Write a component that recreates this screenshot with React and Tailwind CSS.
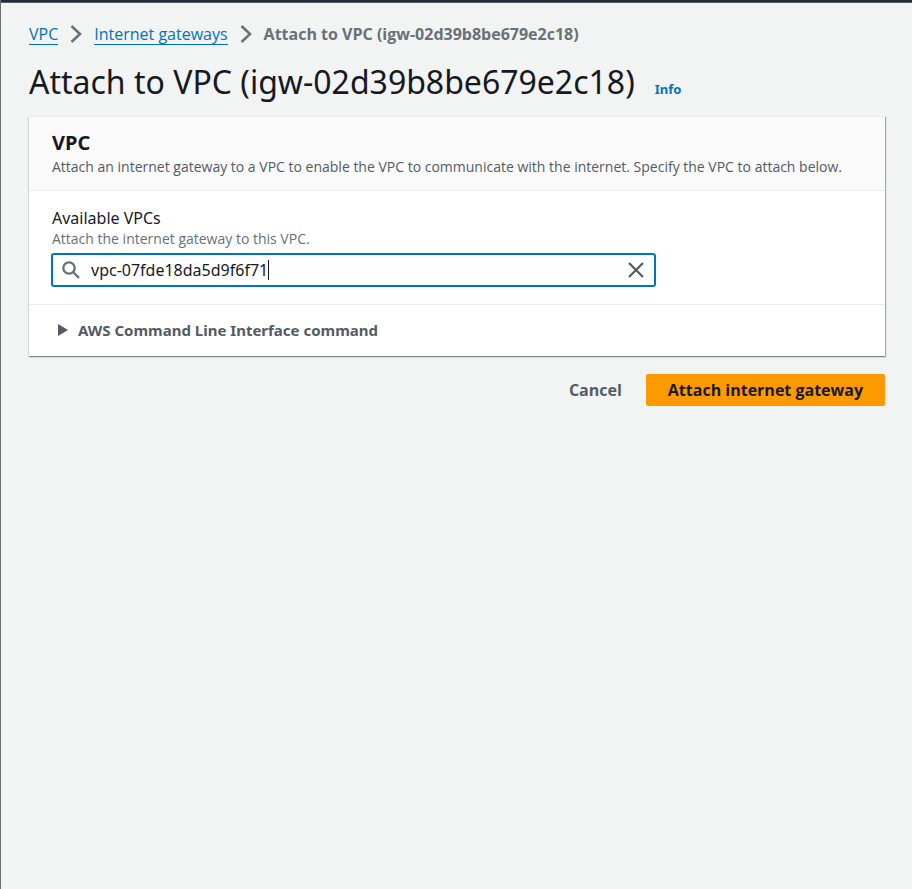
import { useState } from 'react';

function Separator() {
  return (
    <svg className="size-5 shrink-0" viewBox="0 0 20 20" fill="none" stroke="#687078" strokeWidth="2.5" aria-hidden="true">
      <path d="M5.5 2l8.5 8-8.5 8" />
    </svg>
  );
}

function Breadcrumbs() {
  const link = 'block border-b border-[#0073bb] text-[#0073bb]';
  return (
    <nav aria-label="Breadcrumbs">
      <ol className="flex items-start gap-2 font-['Open_Sans',sans-serif] text-base leading-5">
        <li><a href="#vpc" className={link}>VPC</a></li>
        <li><Separator /></li>
        <li><a href="#gateways" className={link}>Internet gateways</a></li>
        <li><Separator /></li>
        <li className="font-bold text-[#687078]">Attach to VPC (igw-02d39b8be679e2c18)</li>
      </ol>
    </nav>
  );
}

function VpcSearch() {
  const [value, setValue] = useState('vpc-07fde18da5d9f6f71');
  return (
    <div className="mt-[5px] flex h-8 w-full max-w-[603px] items-center rounded-xs border border-[#0073bb] bg-white pr-2.5 pl-2 ring-1 ring-[#0073bb]">
      <svg className="size-5 shrink-0" viewBox="0 0 20 20" fill="none" stroke="#687078" strokeWidth="2.3" aria-hidden="true">
        <circle cx="8" cy="8" r="5.7" />
        <path d="M12 12l6 5.8" />
      </svg>
      <input
        id="available-vpcs"
        type="text"
        autoFocus
        autoComplete="off"
        value={value}
        onChange={(e) => setValue(e.target.value)}
        className="field-sizing-content min-w-0 pl-2.5 text-base leading-5 text-[#16191f] caret-transparent outline-none"
      />
      <span className="h-5 w-px shrink-0 bg-[#16191f]" aria-hidden="true" />
      <button type="button" aria-label="Clear" className="ml-auto" onClick={() => setValue('')}>
        <svg className="size-4" viewBox="0 0 16 16" fill="none" stroke="#545b64" strokeWidth="2.2" aria-hidden="true">
          <path d="M1 1l14 14M15 1L1 15" />
        </svg>
      </button>
    </div>
  );
}

export default function App() {
  return (
    <div className="min-h-screen border-l border-l-[#687078] bg-[#f2f3f3] font-['Noto_Sans','Open_Sans',sans-serif] text-[#16191f]">
      <div className="h-[3px] border-b border-[#545b64] bg-[#232f3e]" />
      <main className="pt-[21px] pr-[27px] pl-7">
        <Breadcrumbs />
        <div className="mt-[17px] flex items-baseline gap-5">
          <h1 className="text-[32px] leading-10">Attach to VPC (igw-02d39b8be679e2c18)</h1>
          <a href="#info" className="text-[13px] font-bold text-[#0073bb]">Info</a>
        </div>

        <section className="mt-3.5 border-t border-[#eaeded] bg-white shadow-[1px_1px_1px_0_rgba(0,28,36,0.3),0_1px_1px_0_rgba(0,28,36,0.2),-1px_1px_1px_0_rgba(0,28,36,0.1)]">
          <header className="border-b border-[#eaeded] bg-[#fafafa] px-[23px] pt-3 pb-[13px]">
            <h2 className="text-xl leading-7 font-bold">VPC</h2>
            <p className="font-['Open_Sans',sans-serif] text-sm leading-5 text-[#545b64]">
              Attach an internet gateway to a VPC to enable the VPC to communicate with the internet. Specify the VPC to attach below.
            </p>
          </header>
          <div className="px-[23px] pt-4 pb-[18px]">
            <label htmlFor="available-vpcs" className="block text-base leading-[22px]">Available VPCs</label>
            <p className="font-['Open_Sans',sans-serif] text-sm leading-5 text-[#687078]">Attach the internet gateway to this VPC.</p>
            <VpcSearch />
          </div>
          <div className="border-t border-[#eaeded] px-[23px] pt-[15px] pb-4">
            <button type="button" aria-expanded="false" className="flex items-center gap-2.5 pl-1.5 text-[15px] leading-5 font-bold text-[#545b64]">
              <svg className="h-3 w-2.5" viewBox="0 0 10 12" fill="#545b64" aria-hidden="true">
                <path d="M0 0l10 6-10 6z" />
              </svg>
              AWS Command Line Interface command
            </button>
          </div>
        </section>

        <div className="mt-[18px] flex justify-end font-['Open_Sans',sans-serif] text-base leading-5 font-bold">
          <button type="button" className="px-6 py-1.5 text-[#545b64]">Cancel</button>
          <button type="button" className="rounded-xs bg-[#ff9900] px-[22px] py-1.5 text-[#16191f]">Attach internet gateway</button>
        </div>
      </main>
    </div>
  );
}
